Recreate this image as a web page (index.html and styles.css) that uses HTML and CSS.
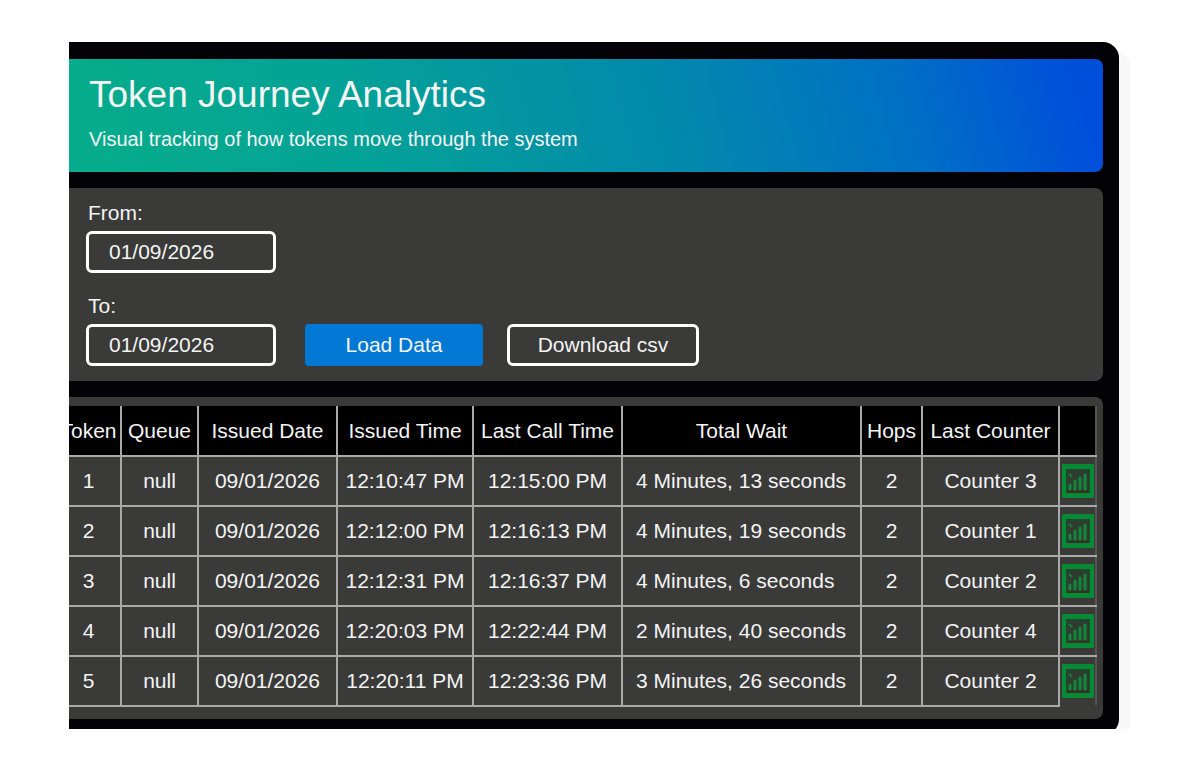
FILE: index.html
```
<!DOCTYPE html>
<html lang="en">
<head>
  <meta charset="UTF-8" />
  <meta name="viewport" content="width=device-width, initial-scale=1.0"/>
  <title>Token Journey Analytics</title>
  <link rel="stylesheet" href="styles.css">
</head>
<body>

  <svg class="sprite" aria-hidden="true">
    <symbol id="chart" viewBox="0 0 34 36">
      <rect x="1" y="1" width="32" height="34" rx="1" fill="#078a35"/>
      <rect x="5" y="6" width="24" height="24" fill="#24452b"/>
      <rect x="7" y="8" width="20" height="20" fill="#2f3d30"/>
      <path d="M9 26v-4M14 26v-8M19 26v-11M24 26v-14" stroke="#12863a" stroke-width="3" stroke-linecap="round"/>
      <path d="M8 11l3 3" stroke="#1c7a3a" stroke-width="2"/>
      <path d="M7 29h20" stroke="#3a2f25" stroke-width="2"/>
    </symbol>
  </svg>

  <main class="viewport">
    <div class="panel">
      <header class="banner">
        <h1>Token Journey Analytics</h1>
        <p>Visual tracking of how tokens move through the system</p>
      </header>

      <form class="filters" id="filterForm">
        <div class="field">
          <label for="from">From:</label>
          <input type="text" id="from" name="from" value="01/09/2026" />
        </div>
        <div class="filter-row">
          <div class="field">
            <label for="to">To:</label>
            <input type="text" id="to" name="to" value="01/09/2026" />
          </div>
          <button type="submit" class="load">Load Data</button>
          <button type="button" class="download">Download csv</button>
        </div>
      </form>

      <section class="results">
        <table>
          <colgroup>
            <col class="c-token"><col class="c-queue"><col class="c-date"><col class="c-issued"><col class="c-call"><col><col class="c-hops"><col class="c-counter"><col class="c-action">
          </colgroup>
          <thead>
            <tr>
              <th>Token</th>
              <th>Queue</th>
              <th>Issued Date</th>
              <th>Issued Time</th>
              <th>Last Call Time</th>
              <th>Total Wait</th>
              <th>Hops</th>
              <th>Last Counter</th>
              <th></th>
            </tr>
          </thead>
          <tbody>
            <tr>
              <td>1</td><td>null</td><td>09/01/2026</td><td>12:10:47 PM</td><td>12:15:00 PM</td>
              <td class="wait">4 Minutes, 13 seconds</td><td>2</td><td>Counter 3</td>
              <td class="action"><button type="button" aria-label="Show journey of token 1"><svg><use href="#chart"/></svg></button></td>
            </tr>
            <tr>
              <td>2</td><td>null</td><td>09/01/2026</td><td>12:12:00 PM</td><td>12:16:13 PM</td>
              <td class="wait">4 Minutes, 19 seconds</td><td>2</td><td>Counter 1</td>
              <td class="action"><button type="button" aria-label="Show journey of token 2"><svg><use href="#chart"/></svg></button></td>
            </tr>
            <tr>
              <td>3</td><td>null</td><td>09/01/2026</td><td>12:12:31 PM</td><td>12:16:37 PM</td>
              <td class="wait">4 Minutes, 6 seconds</td><td>2</td><td>Counter 2</td>
              <td class="action"><button type="button" aria-label="Show journey of token 3"><svg><use href="#chart"/></svg></button></td>
            </tr>
            <tr>
              <td>4</td><td>null</td><td>09/01/2026</td><td>12:20:03 PM</td><td>12:22:44 PM</td>
              <td class="wait">2 Minutes, 40 seconds</td><td>2</td><td>Counter 4</td>
              <td class="action"><button type="button" aria-label="Show journey of token 4"><svg><use href="#chart"/></svg></button></td>
            </tr>
            <tr>
              <td>5</td><td>null</td><td>09/01/2026</td><td>12:20:11 PM</td><td>12:23:36 PM</td>
              <td class="wait">3 Minutes, 26 seconds</td><td>2</td><td>Counter 2</td>
              <td class="action"><button type="button" aria-label="Show journey of token 5"><svg><use href="#chart"/></svg></button></td>
            </tr>
          </tbody>
        </table>
      </section>
    </div>
  </main>

</body>
</html>
```
FILE: styles.css
```
:root {
  --panel-bg: #020207;
  --card-bg: #3a3a39;
  --line-color: #a9a9a9;
  --text-color: #f4f4f4;
  --accent-color: #0078d4;
}

* {
  margin: 0;
  padding: 0;
  box-sizing: border-box;
}

body {
  font-family: "Liberation Sans", Arial, sans-serif;
  font-size: 21px;
  line-height: 24px;
  background: #fff;
  color: var(--text-color);
}

.sprite {
  display: none;
}

.viewport {
  margin: 42px 70px 0 69px;
  padding-right: 11px;
  overflow: hidden;
}

.panel {
  display: flex;
  flex-direction: column;
  gap: 16px;
  padding: 17px 16px 16px 0;
  margin-bottom: -6px;
  background: var(--panel-bg);
  border-radius: 0 16px 16px 0;
  box-shadow: 11px 8px 0 #f8f8f8;
}

.banner {
  padding: 14px 20px 21px;
  border-radius: 0 8px 8px 0;
  background: linear-gradient(75deg, #06ac8b 3%, #04a297 28%, #0289ac 58%, #0070c4 80%, #004fdb 97%);
}

.banner h1 {
  font-size: 37px;
  line-height: 44px;
  font-weight: normal;
  margin-bottom: 10px;
}

.banner p {
  font-size: 20px;
}

.filters {
  display: flex;
  flex-direction: column;
  gap: 21px;
  padding: 13px 17px 15px;
  border-radius: 0 8px 8px 0;
  background: var(--card-bg);
}

.filter-row {
  display: flex;
  align-items: flex-end;
}

.field {
  display: flex;
  flex-direction: column;
  gap: 6px;
  width: 190px;
}

.field label {
  padding-left: 2px;
}

input,
button {
  font: inherit;
  color: inherit;
}

.field input {
  width: 100%;
  height: 42px;
  padding: 0 20px;
  border: 3px solid #fff;
  border-radius: 6px;
  background: transparent;
}

.load {
  width: 178px;
  height: 42px;
  margin-left: 29px;
  border: none;
  border-radius: 4px;
  background: var(--accent-color);
}

.download {
  width: 192px;
  height: 42px;
  margin-left: 24px;
  border: 3px solid #fff;
  border-radius: 6px;
  background: transparent;
}

.results {
  padding: 9px 6px 12px 0;
  border-radius: 0 8px 8px 0;
  background: var(--card-bg);
}

/* the first column runs past the left edge of the viewport */
table {
  width: calc(100% + 14px);
  margin-left: -14px;
  table-layout: fixed;
  border-collapse: collapse;
}

.c-token { width: 65px; }
.c-queue { width: 77px; }
.c-date { width: 139px; }
.c-issued { width: 136px; }
.c-call { width: 149px; }
.c-hops { width: 61px; }
.c-counter { width: 137px; }
.c-action { width: 37px; }

th,
td {
  height: 50px;
  text-align: center;
  white-space: nowrap;
  border: 2px solid var(--line-color);
}

th {
  font-weight: normal;
  background: #000;
  border-top: none;
}

td.wait {
  text-align: left;
  padding-left: 13px;
}

th:last-child,
td.action {
  border-right-color: #555;
}

tr:last-child td.action {
  border-bottom-color: var(--card-bg);
}

.action button {
  display: block;
  width: 34px;
  height: 36px;
  border: none;
  background: transparent;
  margin: 0 auto;
}

.action svg {
  display: block;
  width: 34px;
  height: 36px;
}
```
